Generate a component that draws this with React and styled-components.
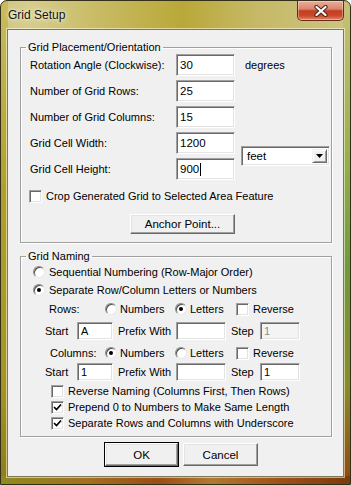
import React from 'react';
import styled, { createGlobalStyle } from 'styled-components';

const GlobalStyle = createGlobalStyle`
  html, body {
    margin: 0;
    padding: 0;
    background: #ffffff;
  }
  * {
    box-sizing: border-box;
  }
`;

const Window = styled.div`
  width: 351px;
  height: 485px;
  display: flex;
  flex-direction: column;
  border: 1px solid #34301a;
  border-radius: 7px 7px 0 0;
  overflow: hidden;
  font-family: "Liberation Sans", Arial, sans-serif;
  font-size: 11px;
  color: #000;
  background:
    linear-gradient(90deg, #8f8a20, #a2701e 25%, #9c4c16 45%, #b07a30 60%, #a0501a 80%, #7a3a0c) left bottom / 100% 8px no-repeat,
    linear-gradient(180deg, #c9c079 0%, #9cb050 30%, #6f9a3c 55%, #8a8a2a 80%, #8f4610 100%) right top / 7px 100% no-repeat,
    linear-gradient(180deg, #c8bc5e 0%, #b0a02a 40%, #a59424 80%, #8e7c18 100%) left top / 7px 100% no-repeat,
    linear-gradient(90deg, #cfc584 0%, #d6cd8e 8%, #c7b960 30%, #b9a838 52%, #c5b865 72%, #cdc483 100%);
`;

const TitleBar = styled.div`
  height: 28px;
  flex: none;
  display: flex;
  justify-content: space-between;
  align-items: flex-start;
  padding: 0 6px 0 7px;
`;

const Title = styled.div`
  font-size: 12px;
  line-height: 28px;
  color: #111;
  text-shadow: 0 0 6px rgba(255, 255, 240, 0.9), 0 0 3px rgba(255, 255, 240, 0.9);
`;

const CloseButton = styled.div`
  width: 47px;
  height: 20px;
  display: flex;
  align-items: center;
  justify-content: center;
  border: 1px solid #6a2a1a;
  border-top: none;
  border-radius: 0 0 5px 5px;
  background: linear-gradient(180deg, #e8ae9c 0%, #da8670 42%, #c53d1f 52%, #c94a2b 78%, #e28a6a 100%);
  box-shadow: inset 0 0 0 1px rgba(255, 255, 255, 0.35);
`;

const Client = styled.div`
  flex: 1;
  margin: 0 6px 7px 6px;
  border: 1px solid #7c7858;
  box-shadow: 0 0 0 1px rgba(255, 255, 235, 0.55);
  background: #f0f0f0;
  padding: 10px 11px 0 12px;
  display: flex;
  flex-direction: column;
`;

const Group = styled.fieldset`
  margin: ${p => p.$top || 0}px 0 0 0;
  padding: 0 0 ${p => p.$bottom || 0}px ${p => p.$left || 0}px;
  width: 312px;
  min-width: 0;
  border: 1px solid #a0a0a0;
  box-shadow: 1px 1px 0 #fff, inset 1px 1px 0 #fff;
`;

const Legend = styled.legend`
  margin-left: ${p => -(p.$left || 0) + 5}px;
  padding: 0 2px;
  line-height: 14px;
`;

const FieldGrid = styled.div`
  display: grid;
  grid-template-columns: 140px 59px 89px;
  column-gap: 6px;
  grid-auto-rows: 22px;
  row-gap: 4px;
  align-items: center;
`;

const FieldLabel = styled.div`
  grid-column: 1;
  white-space: nowrap;
`;

const Unit = styled.div`
  padding-left: 4px;
`;

const TextBox = styled.div`
  width: ${p => p.$w}px;
  height: ${p => p.$h || 22}px;
  display: flex;
  align-items: center;
  padding-left: 3px;
  flex: none;
  border: 1px solid;
  border-color: #a0a0a0 #ffffff #ffffff #a0a0a0;
  box-shadow: inset 1px 1px 0 #696969, inset -1px -1px 0 #e3e3e3;
  background: ${p => (p.$disabled ? '#f4f4f4' : '#ffffff')};
  color: ${p => (p.$disabled ? '#8d8d8d' : '#000')};
  font-size: ${p => (p.$h && p.$h < 20 ? '11px' : '11.5px')};
`;

const Caret = styled.span`
  display: inline-block;
  width: 1px;
  height: 13px;
  margin-left: 1px;
  background: #000;
`;

const Select = styled.div`
  grid-column: 3;
  grid-row: 4 / span 2;
  align-self: center;
  height: 20px;
  display: flex;
  align-items: stretch;
  border: 1px solid;
  border-color: #a0a0a0 #ffffff #ffffff #a0a0a0;
  box-shadow: inset 1px 1px 0 #696969, inset -1px -1px 0 #e3e3e3;
  background: #fff;
  padding: 2px 2px 2px 5px;
  font-size: 11.5px;
`;

const SelectText = styled.div`
  flex: 1;
  display: flex;
  align-items: center;
`;

const SelectArrow = styled.div`
  width: 15px;
  display: flex;
  align-items: center;
  justify-content: center;
  background: #f0f0f0;
  border: 1px solid;
  border-color: #f0f0f0 #696969 #696969 #f0f0f0;
  box-shadow: inset 1px 1px 0 #fff, inset -1px -1px 0 #a0a0a0;
`;

const CheckRow = styled.div`
  height: ${p => p.$h || 16}px;
  margin: ${p => p.$top || 0}px 0 0 ${p => p.$indent || 0}px;
  display: flex;
  align-items: center;
  white-space: nowrap;
`;

const CheckBox = styled.span`
  width: 13px;
  height: 13px;
  flex: none;
  margin-right: ${p => p.$gap || 4}px;
  display: inline-flex;
  align-items: center;
  justify-content: center;
  background: #fff;
  border: 1px solid;
  border-color: #a0a0a0 #ffffff #ffffff #a0a0a0;
  box-shadow: inset 1px 1px 0 #696969, inset -1px -1px 0 #e3e3e3;
`;

const RadioBox = styled.span`
  width: 12px;
  height: 12px;
  flex: none;
  margin-right: ${p => p.$gap || 4}px;
  border-radius: 50%;
  display: inline-flex;
  align-items: center;
  justify-content: center;
  background: #fff;
  border: 1px solid;
  border-color: #8a8a8a #e8e8e8 #e8e8e8 #8a8a8a;
  box-shadow: inset 1px 1px 0 #505050;

  &::after {
    content: '';
    width: 4px;
    height: 4px;
    border-radius: 50%;
    background: ${p => (p.$checked ? '#000' : 'transparent')};
  }
`;

const Cell = styled.div`
  width: ${p => p.$w}px;
  flex: none;
  display: flex;
  align-items: center;
  padding-left: ${p => p.$pad || 0}px;
  white-space: nowrap;
`;

const NamingRow = styled.div`
  height: ${p => p.$h}px;
  margin-top: ${p => p.$top || 0}px;
  padding-left: ${p => p.$indent || 0}px;
  display: flex;
  align-items: center;
`;

const PushButton = styled.div`
  width: ${p => p.$w}px;
  height: ${p => p.$h || 23}px;
  display: flex;
  align-items: center;
  justify-content: center;
  background: #f0f0f0;
  border: 1px solid;
  border-color: #ffffff #696969 #696969 #ffffff;
  box-shadow: inset -1px -1px 0 #a0a0a0, inset 1px 1px 0 #e3e3e3${p => (p.$default ? ', 0 0 0 1px #000' : '')};
  font-size: 11.5px;
`;

const AnchorRow = styled.div`
  margin-top: 10px;
  padding-left: 100px;
`;

const ButtonRow = styled.div`
  display: flex;
  align-items: center;
  gap: 5px;
  margin-top: 6px;
  padding-left: 85px;
`;

const Check = () => (
  <svg width="9" height="9" viewBox="0 0 9 9">
    <polyline points="1,4 3.5,6.5 8,1.5" fill="none" stroke="#000" strokeWidth="1.7" />
  </svg>
);

const App = () => {
  return (
    <>
      <GlobalStyle />
      <Window>
        <TitleBar>
          <Title>Grid Setup</Title>
          <CloseButton>
            <svg width="16" height="12" viewBox="0 0 16 12">
              <path d="M3.5 2 L12.5 10 M12.5 2 L3.5 10" stroke="#4a2418" strokeWidth="4.2" strokeLinecap="round" />
              <path d="M3.5 2 L12.5 10 M12.5 2 L3.5 10" stroke="#ffffff" strokeWidth="2.2" strokeLinecap="round" />
            </svg>
          </CloseButton>
        </TitleBar>
        <Client>
          <Group $left={9} $bottom={8}>
            <Legend $left={9}>Grid Placement/Orientation</Legend>
            <FieldGrid>
              <FieldLabel>Rotation Angle (Clockwise):</FieldLabel>
              <TextBox $w={59}>30</TextBox>
              <Unit>degrees</Unit>
              <FieldLabel>Number of Grid Rows:</FieldLabel>
              <TextBox $w={59}>25</TextBox>
              <FieldLabel>Number of Grid Columns:</FieldLabel>
              <TextBox $w={59}>15</TextBox>
              <FieldLabel>Grid Cell Width:</FieldLabel>
              <TextBox $w={59}>1200</TextBox>
              <Select>
                <SelectText>feet</SelectText>
                <SelectArrow>
                  <svg width="7" height="4" viewBox="0 0 7 4">
                    <polygon points="0,0 7,0 3.5,4" fill="#000" />
                  </svg>
                </SelectArrow>
              </Select>
              <FieldLabel>Grid Cell Height:</FieldLabel>
              <TextBox $w={59}>900<Caret /></TextBox>
            </FieldGrid>
            <CheckRow $top={8} $indent={-1}>
              <CheckBox />
              Crop Generated Grid to Selected Area Feature
            </CheckRow>
            <AnchorRow>
              <PushButton $w={105} $h={20}>Anchor Point...</PushButton>
            </AnchorRow>
          </Group>

          <Group $top={6} $left={12} $bottom={5}>
            <Legend $left={12}>Grid Naming</Legend>
            <NamingRow $h={18}>
              <RadioBox />
              Sequential Numbering (Row-Major Order)
            </NamingRow>
            <NamingRow $h={18}>
              <RadioBox $checked />
              Separate Row/Column Letters or Numbers
            </NamingRow>
            <NamingRow $h={20} $indent={16}>
              <Cell $w={56}>Rows:</Cell>
              <Cell $w={70}><RadioBox $gap={3} />Numbers</Cell>
              <Cell $w={61}><RadioBox $gap={3} $checked />Letters</Cell>
              <Cell $w={70}><CheckBox $gap={4} />Reverse</Cell>
            </NamingRow>
            <NamingRow $h={24} $indent={12}>
              <Cell $w={32}>Start</Cell>
              <TextBox $w={36} $h={18}>A</TextBox>
              <Cell $w={63} $pad={5}>Prefix With</Cell>
              <TextBox $w={50} $h={18} />
              <Cell $w={34} $pad={5}>Step</Cell>
              <TextBox $w={40} $h={18} $disabled>1</TextBox>
            </NamingRow>
            <NamingRow $h={20} $indent={17}>
              <Cell $w={55}>Columns:</Cell>
              <Cell $w={70}><RadioBox $gap={3} $checked />Numbers</Cell>
              <Cell $w={61}><RadioBox $gap={3} />Letters</Cell>
              <Cell $w={70}><CheckBox $gap={4} />Reverse</Cell>
            </NamingRow>
            <NamingRow $h={18} $indent={12}>
              <Cell $w={32}>Start</Cell>
              <TextBox $w={36} $h={18}>1</TextBox>
              <Cell $w={63} $pad={5}>Prefix With</Cell>
              <TextBox $w={50} $h={18} />
              <Cell $w={34} $pad={5}>Step</Cell>
              <TextBox $w={40} $h={18}>1</TextBox>
            </NamingRow>
            <CheckRow $top={2} $indent={18}>
              <CheckBox />
              Reverse Naming (Columns First, Then Rows)
            </CheckRow>
            <CheckRow $indent={18}>
              <CheckBox><Check /></CheckBox>
              Prepend 0 to Numbers to Make Same Length
            </CheckRow>
            <CheckRow $indent={18}>
              <CheckBox><Check /></CheckBox>
              Separate Rows and Columns with Underscore
            </CheckRow>
          </Group>

          <ButtonRow>
            <PushButton $w={73} $default>OK</PushButton>
            <PushButton $w={75}>Cancel</PushButton>
          </ButtonRow>
        </Client>
      </Window>
    </>
  );
};

export default App;
